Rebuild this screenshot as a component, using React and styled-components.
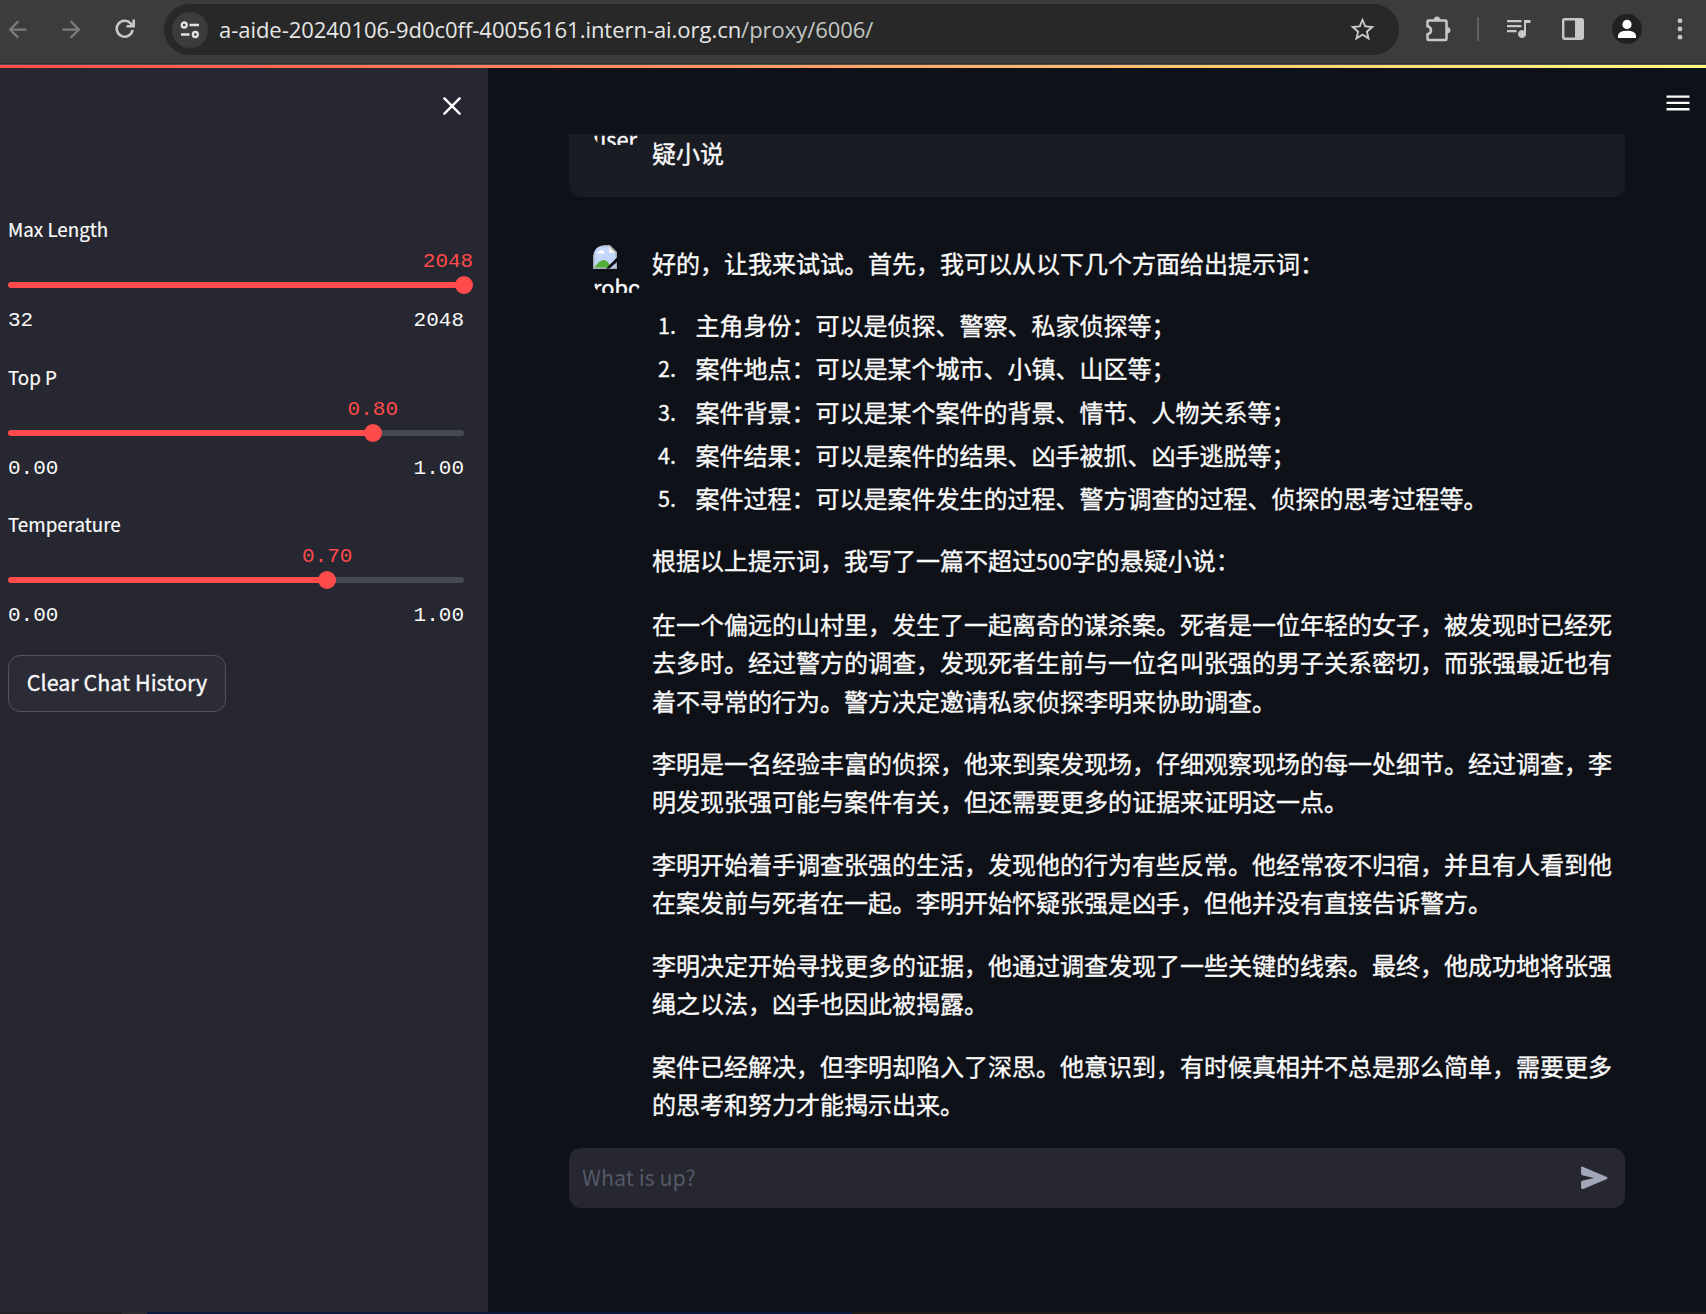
import React from "react";
import styled, { createGlobalStyle } from "styled-components";

const sans = `"Noto Sans CJK SC", "Noto Sans", sans-serif`;
const mono = `"Liberation Mono", "Noto Sans CJK SC", monospace`;

const GlobalStyle = createGlobalStyle`
  *, *::before, *::after { box-sizing: border-box; }
  html, body { margin: 0; padding: 0; background: #0e1117; }
  body { overflow: hidden; font-family: ${sans}; color: #fafafa; }
  svg { display: block; flex: none; }
`;

const Screen = styled.div`
  display: flex;
  flex-direction: column;
  width: 1706px;
  height: 1314px;
  overflow: hidden;
`;

/* Browser toolbar */
const Toolbar = styled.header`
  display: flex;
  align-items: flex-start;
  height: 65px;
  flex: none;
  background: #3c3c3c;
  border-bottom: 1px solid #4a4b4c;
  box-shadow: inset 0 -1px 0 #2d2e2f;
`;
const Slot = styled.div`
  display: flex;
  align-items: center;
  justify-content: center;
  flex: none;
  width: ${(p) => p.$w}px;
  height: 58px;
  margin-left: ${(p) => p.$gap || 0}px;
  color: ${(p) => (p.$dim ? "#7c7c7c" : "#c7c7c7")};
`;
const AddressBar = styled.div`
  display: flex;
  align-items: center;
  flex: none;
  width: 1235px;
  height: 51px;
  margin: 4px 0 0 20px;
  padding: 0 22px 0 8px;
  border-radius: 26px;
  background: #282828;
  color: #c7c7c7;
`;
const SiteInfo = styled.div`
  display: flex;
  align-items: center;
  justify-content: center;
  width: 36px;
  height: 36px;
  border-radius: 50%;
  background: #3c3c3c;
  color: #e3e3e3;
`;
const Url = styled.div`
  flex: 1;
  padding: 0 0 2px 11px;
  font: 400 22px/48px "Open Sans", "Noto Sans", sans-serif;
  letter-spacing: -0.04px;
  white-space: nowrap;
  color: #c4c7c5;
`;
const Host = styled.span`
  color: #e6e6e6;
`;
const Divider = styled.i`
  width: 2px;
  height: 24px;
  background: #5e5e5e;
`;
const Profile = styled.div`
  display: flex;
  align-items: center;
  justify-content: center;
  width: 30px;
  height: 30px;
  border-radius: 50%;
  background: #1e2120;
  color: #fff;
`;

const Decoration = styled.div`
  height: 3px;
  flex: none;
  background: linear-gradient(90deg, #ff4b4b, #fffd80);
`;
const AppBody = styled.div`
  display: flex;
  height: 1244px;
  flex: none;
`;

/* Sidebar */
const Sidebar = styled.aside`
  display: flex;
  flex-direction: column;
  width: 488px;
  flex: none;
  padding: 24px 24px 0 8px;
  background: #262730;
`;
const CloseRow = styled.div`
  display: flex;
  justify-content: flex-end;
  height: 123px;
  padding: 5px 3px 0 0;
`;
const SliderBlock = styled.section`
  height: 147.67px;
  flex: none;
`;
const Label = styled.div`
  height: 30px;
  font-size: 18.8px;
  line-height: 28px;
  -webkit-text-stroke: 0.2px;
`;
const Slider = styled.div`
  position: relative;
  height: 49px;
  padding-top: 37px;
`;
const Track = styled.div`
  height: 6px;
  border-radius: 3px;
  background: ${(p) =>
    `linear-gradient(90deg, #ff4b4b ${p.$at}%, #464853 ${p.$at}%)`};
`;
const Thumb = styled.i`
  position: absolute;
  top: 31px;
  left: ${(p) => p.$at}%;
  width: 18px;
  height: 18px;
  margin-left: -9px;
  border-radius: 50%;
  background: #ff4b4b;
`;
const Value = styled.span`
  position: absolute;
  top: 1px;
  left: min(${(p) => p.$at}%, calc(100% - 16px));
  transform: translateX(-50%);
  font: 400 21px/32px ${mono};
  color: #ff4b4b;
`;
const Bounds = styled.div`
  display: flex;
  justify-content: space-between;
  margin-top: 11px;
  font: 400 21px/32px ${mono};
`;
const ClearButton = styled.button`
  align-self: flex-start;
  width: 218px;
  height: 57px;
  flex: none;
  margin-top: -3px;
  padding: 0 0 3px;
  border: 1px solid #52535b;
  border-radius: 12px;
  background: #2b2c36;
  color: #fafafa;
  font: 400 21.5px/1 ${sans};
  -webkit-text-stroke: 0.3px;
  white-space: nowrap;
`;

/* Chat */
const Main = styled.main`
  display: flex;
  flex-direction: column;
  flex: 1;
  background: #0e1117;
`;
const MenuRow = styled.div`
  display: flex;
  justify-content: flex-end;
  height: 66px;
  flex: none;
  padding: 27px 16px 0 0;
`;
const ChatScroll = styled.div`
  width: 1056px;
  height: 1014px;
  flex: none;
  margin-left: 81px;
  overflow: hidden;
`;
const Message = styled.article`
  display: flex;
  gap: 11px;
  padding: 24px 11px 24px 24px;
  border-radius: 12px;
  background: ${(p) => (p.$user ? "#1a1c24" : "transparent")};
  ${(p) => p.$user && "height: 124px; margin: -61px 0 24px;"}
`;
const Avatar = styled.div`
  width: 48px;
  height: 48px;
  flex: none;
  border-radius: 12px;
  overflow: hidden;
  font-size: 21.8px;
  line-height: 38.4px;
  white-space: nowrap;
  -webkit-text-stroke: 0.4px;
`;
const AltText = styled.div`
  margin-top: -1px;
`;
const Prose = styled.div`
  width: 962px;
  flex: none;
  font-size: 24px;
  line-height: 38.4px;
  margin-top: -1.2px;
  padding-top: ${(p) => (p.$user ? 38 : 0)}px;
  -webkit-text-stroke: 0.35px;
`;
const Paragraph = styled.p`
  margin: 0 0 24px;
`;
const List = styled.ol`
  display: grid;
  gap: 4.8px;
  margin: 0 0 24px;
  padding: 0;
  list-style: none;
`;
const Item = styled.li`
  display: flex;
`;
const Marker = styled.span`
  width: 43.5px;
  padding-left: 6px;
  font-size: 21.5px;
`;
const Latin = styled.span`
  font-size: 21.5px;
`;
const Composer = styled.form`
  display: flex;
  align-items: center;
  justify-content: space-between;
  width: 1056px;
  height: 60px;
  flex: none;
  margin-left: 81px;
  padding: 0 13px 0 13px;
  border-radius: 12px;
  background: #262730;
  color: #a3a8b8;
`;
const Input = styled.input`
  flex: 1;
  height: 40px;
  padding: 0 0 3px;
  border: 0;
  outline: 0;
  background: transparent;
  color: #fafafa;
  font: 400 21.5px/37px ${sans};
  &::placeholder { color: #555867; opacity: 1; }
`;

const BottomEdge = styled.footer`
  height: 2px;
  flex: none;
  background: linear-gradient(
    90deg,
    #202127 122px, #2c2b30 122px 147px, #0b1a3c 147px 852px, #1c1917 852px
  );
`;

const Material = ({ size = 24, d }) => (
  <svg width={size} height={size} viewBox="0 0 24 24" fill="currentColor">
    <path d={d} />
  </svg>
);

const BrokenImage = () => (
  <svg width="24" height="24" viewBox="0 0 24 24">
    <path d="M0 0H17L24 7V24H0Z" fill="#a6abb3" />
    <path d="M1.5 1.5H16V8H22.5V22.5H1.5Z" fill="#c3d6fb" />
    <path d="M4 8.5Q4 6.5 6 6.5Q7 4 9 5.5Q12 6 11.5 8.5Z" fill="#fff" />
    <path d="M1.5 22.5Q6 15 11 15Q15 15 18 22.5Z" fill="#56ad35" />
    <path d="M16 1.5L22.5 8H16Z" fill="#f3f3f3" />
    <path d="M24 12.5L13 23.5H16.5L24 17Z" fill="#0e1117" />
  </svg>
);

const sliders = [
  { label: "Max Length", min: "32", max: "2048", value: "2048", at: 100 },
  { label: "Top P", min: "0.00", max: "1.00", value: "0.80", at: 80 },
  { label: "Temperature", min: "0.00", max: "1.00", value: "0.70", at: 70 },
];

const hints = [
  "主角身份：可以是侦探、警察、私家侦探等；",
  "案件地点：可以是某个城市、小镇、山区等；",
  "案件背景：可以是某个案件的背景、情节、人物关系等；",
  "案件结果：可以是案件的结果、凶手被抓、凶手逃脱等；",
  "案件过程：可以是案件发生的过程、警方调查的过程、侦探的思考过程等。",
];

const story = [
  "在一个偏远的山村里，发生了一起离奇的谋杀案。死者是一位年轻的女子，被发现时已经死去多时。经过警方的调查，发现死者生前与一位名叫张强的男子关系密切，而张强最近也有着不寻常的行为。警方决定邀请私家侦探李明来协助调查。",
  "李明是一名经验丰富的侦探，他来到案发现场，仔细观察现场的每一处细节。经过调查，李明发现张强可能与案件有关，但还需要更多的证据来证明这一点。",
  "李明开始着手调查张强的生活，发现他的行为有些反常。他经常夜不归宿，并且有人看到他在案发前与死者在一起。李明开始怀疑张强是凶手，但他并没有直接告诉警方。",
  "李明决定开始寻找更多的证据，他通过调查发现了一些关键的线索。最终，他成功地将张强绳之以法，凶手也因此被揭露。",
  "案件已经解决，但李明却陷入了深思。他意识到，有时候真相并不总是那么简单，需要更多的思考和努力才能揭示出来。",
];

export default function App() {
  return (
    <Screen lang="zh-CN">
      <GlobalStyle />
      <Toolbar>
        <Slot $w={36} $gap={-1} $dim>
          <Material size={27} d="M20 11H7.83l5.59-5.59L12 4l-8 8 8 8 1.41-1.41L7.83 13H20v-2z" />
        </Slot>
        <Slot $w={36} $gap={18} $dim>
          <Material size={27} d="M12 4l-1.41 1.41L16.17 11H4v2h12.17l-5.58 5.59L12 20l8-8z" />
        </Slot>
        <Slot $w={38} $gap={17}>
          <svg width="20" height="20" viewBox="0 0 20 20" fill="none" stroke="currentColor" strokeWidth="2.6">
            <path d="M17.6 11A8 8 0 1 1 15.6 4.3L18 6.7M18.7 .5V7.2H11.5" />
          </svg>
        </Slot>
        <AddressBar>
          <SiteInfo>
            <svg width="20" height="18" viewBox="0 0 20 18" fill="none" stroke="currentColor" strokeWidth="2.3">
              <circle cx="4.2" cy="4" r="2.5" />
              <path d="M9.5 4H19M1 13.5H9.5" />
              <circle cx="15.3" cy="13.5" r="2.5" />
            </svg>
          </SiteInfo>
          <Url>
            <Host>a-aide-20240106-9d0c0ff-40056161.intern-ai.org.cn</Host>/proxy/6006/
          </Url>
          <Material size={29} d="M22 9.24l-7.19-.62L12 2 9.19 8.63 2 9.24l5.46 4.73L5.82 21 12 17.27 18.18 21l-1.63-7.03L22 9.24zM12 15.4l-3.76 2.27 1-4.28-3.32-2.88 4.38-.38L12 6.1l1.71 4.04 4.38.38-3.32 2.88 1 4.28L12 15.4z" />
        </AddressBar>
        <Slot $w={30} $gap={24}>
          <svg width="26" height="26" viewBox="0 0 26 26">
            <path d="M3.5 4.5H20.5Q21.5 4.5 21.5 5.5V23Q21.5 24 20.5 24H3.5Q2.5 24 2.5 23V18.3Q6 17.5 6 14.3Q6 11.2 2.5 10.3V5.5Q2.5 4.5 3.5 4.5Z" fill="none" stroke="currentColor" strokeWidth="2.5" />
            <path d="M8.7 4Q9 .5 12 .5T15.3 4ZM22 11Q25.5 11.3 25.5 14.3T22 17.6Z" fill="currentColor" />
          </svg>
        </Slot>
        <Slot $w={20} $gap={15}><Divider /></Slot>
        <Slot $w={30} $gap={16}>
          <svg width="24" height="20" viewBox="0 0 24 20" fill="currentColor">
            <path d="M0 1H14.5V3.3H0ZM0 6H14.5V8.3H0ZM0 11H9.5V13.3H0ZM17 1H23.5V4H19V15A4 4 0 1 1 17 11.6Z" />
          </svg>
        </Slot>
        <Slot $w={30} $gap={24}>
          <svg width="22" height="22" viewBox="0 0 22 22">
            <rect x="1.2" y="1.2" width="19.6" height="19.6" rx="1.5" fill="none" stroke="currentColor" strokeWidth="2.4" />
            <path d="M13 1H20V21H13Z" fill="currentColor" />
          </svg>
        </Slot>
        <Slot $w={30} $gap={24}>
          <Profile>
            <svg width="20" height="20" viewBox="0 0 20 20" fill="currentColor">
              <circle cx="10" cy="5.4" r="4.6" />
              <path d="M1 19V16.8Q1.5 11.8 10 11.8T19 16.8V19Z" />
            </svg>
          </Profile>
        </Slot>
        <Slot $w={20} $gap={28}>
          <svg width="6" height="22" viewBox="0 0 6 22" fill="currentColor">
            <circle cx="3" cy="2.8" r="2.4" />
            <circle cx="3" cy="11" r="2.4" />
            <circle cx="3" cy="19.2" r="2.4" />
          </svg>
        </Slot>
      </Toolbar>
      <Decoration />
      <AppBody>
        <Sidebar>
          <CloseRow>
            <svg width="18" height="18" viewBox="0 0 18 18" stroke="#fff" strokeWidth="2.4" strokeLinecap="round">
              <path d="M1.4 1.4L16.6 16.6M16.6 1.4L1.4 16.6" />
            </svg>
          </CloseRow>
          {sliders.map((s) => (
            <SliderBlock key={s.label}>
              <Label>{s.label}</Label>
              <Slider>
                <Value $at={s.at}>{s.value}</Value>
                <Track $at={s.at} />
                <Thumb $at={s.at} />
              </Slider>
              <Bounds>
                <span>{s.min}</span>
                <span>{s.max}</span>
              </Bounds>
            </SliderBlock>
          ))}
          <ClearButton type="button">Clear Chat History</ClearButton>
        </Sidebar>
        <Main>
          <MenuRow>
            <svg width="24" height="16" viewBox="0 0 24 16" fill="#fafafa">
              <path d="M.5 .4H23.5V2.7H.5ZM.5 6.8H23.5V9.1H.5ZM.5 13.1H23.5V15.4H.5Z" />
            </svg>
          </MenuRow>
          <ChatScroll>
            <Message $user>
              <Avatar>
                <BrokenImage />
                <AltText>user</AltText>
              </Avatar>
              <Prose $user>疑小说</Prose>
            </Message>
            <Message>
              <Avatar>
                <BrokenImage />
                <AltText>robot</AltText>
              </Avatar>
              <Prose>
                <Paragraph>好的，让我来试试。首先，我可以从以下几个方面给出提示词：</Paragraph>
                <List>
                  {hints.map((text, i) => (
                    <Item key={text}>
                      <Marker>{i + 1}.</Marker>
                      {text}
                    </Item>
                  ))}
                </List>
                <Paragraph>
                  根据以上提示词，我写了一篇不超过<Latin>500</Latin>字的悬疑小说：
                </Paragraph>
                {story.map((text) => (
                  <Paragraph key={text}>{text}</Paragraph>
                ))}
              </Prose>
            </Message>
          </ChatScroll>
          <Composer>
            <Input placeholder="What is up?" />
            <Material size={36} d="M3.4 4.6V9.2Q3.4 9.9 4.1 10.1L12 12L4.1 13.9Q3.4 14.1 3.4 14.8V18.6Q3.6 19.7 4.8 19.3L20.6 12.7Q21.5 12 20.6 11.3L4.8 4.6Q3.7 4.2 3.4 4.6Z" />
          </Composer>
        </Main>
      </AppBody>
      <BottomEdge />
    </Screen>
  );
}
